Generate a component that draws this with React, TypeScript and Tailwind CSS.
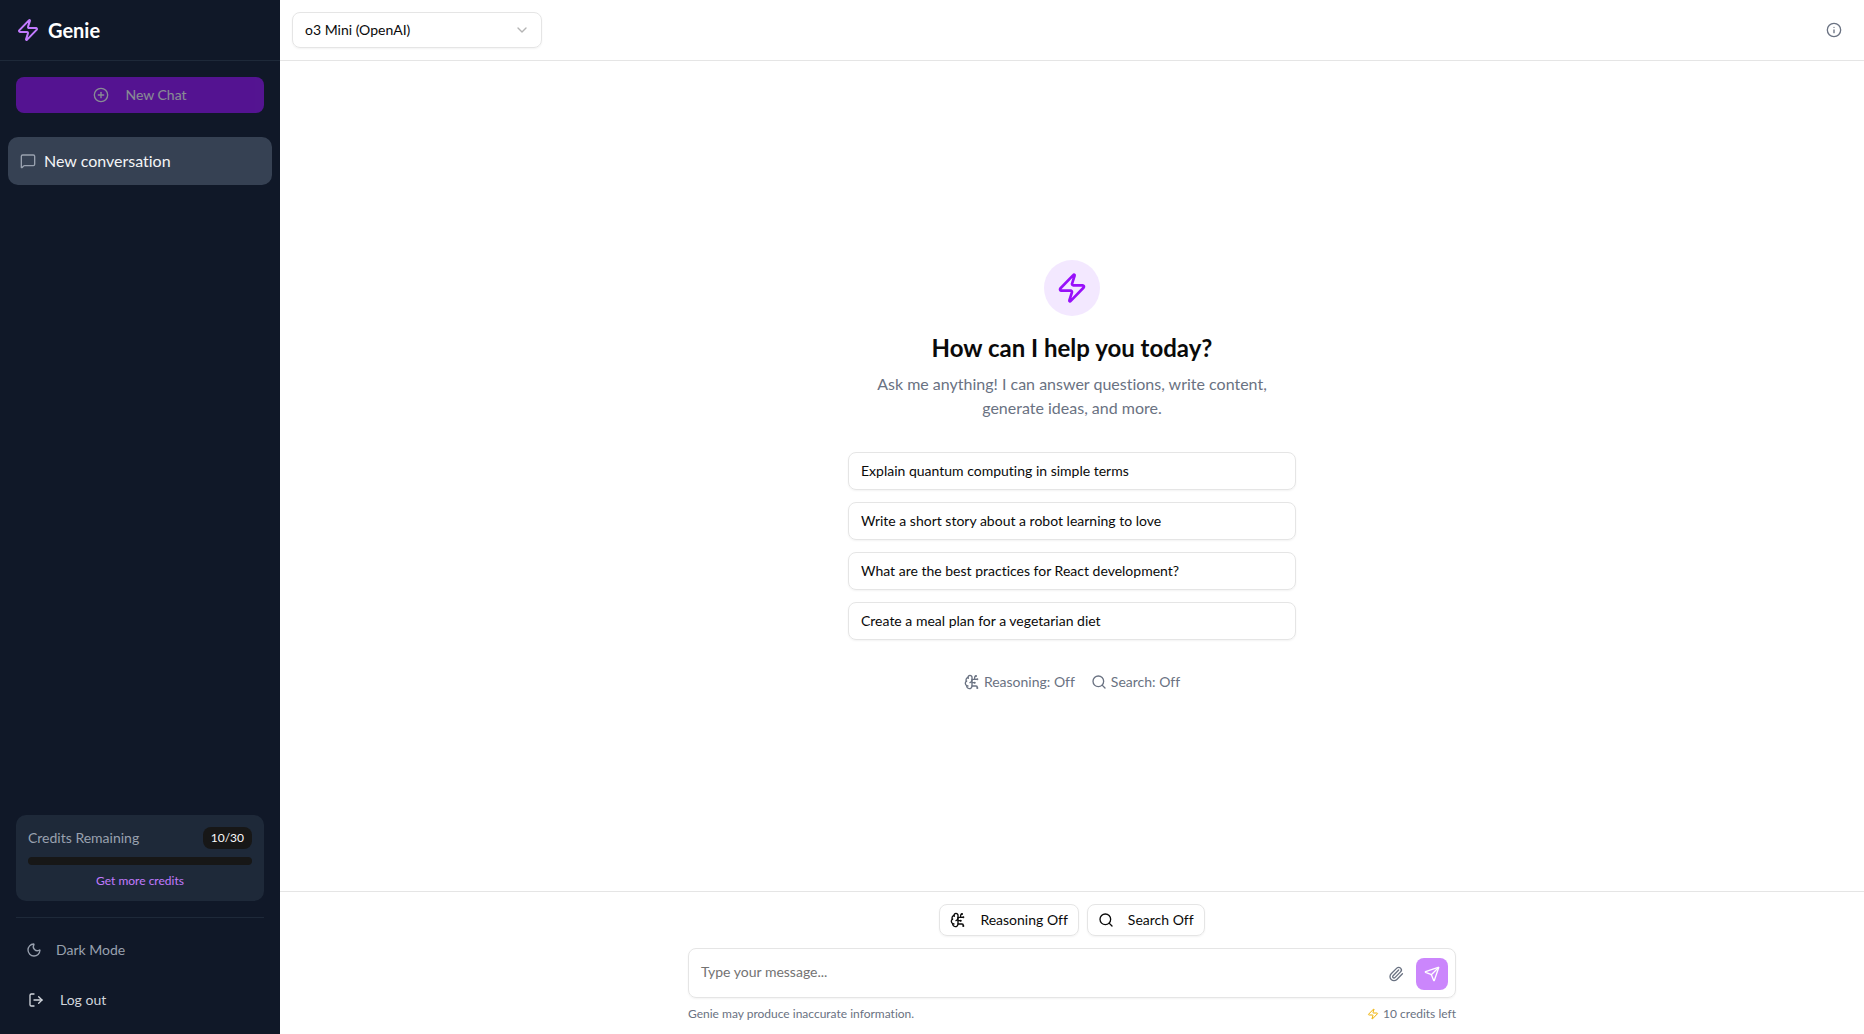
import { useState } from 'react';
import {
    BrainCircuit,
    ChevronDown,
    Info,
    LogOut,
    MessageSquare,
    Moon,
    Paperclip,
    PlusCircle,
    Search,
    Send,
    Zap,
} from 'lucide-react';

const SUGGESTIONS = [
    'Explain quantum computing in simple terms',
    'Write a short story about a robot learning to love',
    'What are the best practices for React development?',
    'Create a meal plan for a vegetarian diet',
];

const MODELS = ['o3 Mini (OpenAI)', 'GPT-4o (OpenAI)', 'Claude 3.5 Sonnet (Anthropic)'];

function Sidebar() {
    return (
        <aside className="flex w-[280px] shrink-0 flex-col bg-gray-900 text-white">
            <div className="flex h-[61px] items-center gap-2 border-b border-gray-800 px-4">
                <Zap size={24} className="text-purple-400" />
                <h1 className="text-xl font-bold">Genie</h1>
            </div>

            <div className="p-4">
                <button
                    type="button"
                    disabled
                    className="flex h-9 w-full items-center justify-center gap-4 rounded-lg bg-purple-600 text-sm text-white opacity-50"
                >
                    <PlusCircle size={16} />
                    New Chat
                </button>
            </div>

            <nav className="flex-1 p-2">
                <a href="#new" className="flex h-12 items-center gap-2 rounded-[10px] bg-gray-700 px-3 text-gray-100">
                    <MessageSquare size={16} className="text-gray-400" />
                    <span className="truncate">New conversation</span>
                </a>
            </nav>

            <div className="p-4">
                <div className="rounded-[10px] bg-gray-800 p-3">
                    <div className="mb-2 flex items-center justify-between">
                        <span className="text-sm text-gray-400">Credits Remaining</span>
                        <span className="rounded-lg bg-neutral-900 px-2 py-[3px] text-xs text-neutral-50">10/30</span>
                    </div>
                    <div className="h-2 rounded-full bg-neutral-900" />
                    <a href="#credits" className="mt-2 block text-center text-xs text-purple-400">
                        Get more credits
                    </a>
                </div>

                <div className="mt-4 border-t border-gray-800 pt-3">
                    <button type="button" className="flex h-10 w-full items-center gap-3.5 px-2.5 text-sm text-gray-400">
                        <Moon size={16} />
                        Dark Mode
                    </button>
                    <button type="button" className="mt-3 flex h-9 w-full items-center gap-4 px-3 text-sm text-gray-300">
                        <LogOut size={16} />
                        Log out
                    </button>
                </div>
            </div>
        </aside>
    );
}

function Welcome() {
    return (
        <section className="flex flex-1 flex-col items-center justify-center px-4 text-center">
            <div className="mb-4 flex size-14 items-center justify-center rounded-full bg-purple-100">
                <Zap size={32} className="text-purple-600" />
            </div>
            <h2 className="mb-2 text-2xl font-bold">How can I help you today?</h2>
            <p className="mb-8 max-w-md text-gray-500">
                Ask me anything! I can answer questions, write content, generate ideas, and more.
            </p>

            <div className="flex w-full max-w-md flex-col gap-3">
                {SUGGESTIONS.map((text) => (
                    <button
                        key={text}
                        type="button"
                        className="h-[38px] rounded-lg border border-neutral-200 px-3 text-left text-sm shadow-xs"
                    >
                        {text}
                    </button>
                ))}
            </div>

            <div className="mt-8 flex items-center gap-4 text-sm text-gray-500">
                <span className="flex items-center gap-1">
                    <BrainCircuit size={16} />
                    Reasoning: Off
                </span>
                <span className="flex items-center gap-1">
                    <Search size={16} />
                    Search: Off
                </span>
            </div>
        </section>
    );
}

function Composer() {
    const [message, setMessage] = useState('');
    const toggle = 'flex h-8 items-center gap-3.5 rounded-lg border border-neutral-200 px-2.5 text-sm shadow-xs';

    return (
        <footer className="border-t border-neutral-200 p-3">
            <div className="mx-auto max-w-3xl">
                <div className="mb-3 flex justify-center gap-2">
                    <button type="button" className={toggle}>
                        <BrainCircuit size={16} />
                        Reasoning Off
                    </button>
                    <button type="button" className={toggle}>
                        <Search size={16} />
                        Search Off
                    </button>
                </div>

                <form className="flex h-[50px] items-end rounded-lg border border-neutral-200 pr-[7px] pb-[7px] shadow-xs">
                    <textarea
                        rows={1}
                        aria-label="Message"
                        placeholder="Type your message..."
                        value={message}
                        onChange={(e) => setMessage(e.target.value)}
                        className="h-10 flex-1 resize-none px-3 pt-3 text-sm outline-none placeholder:text-neutral-500"
                    />
                    <button type="button" aria-label="Attach file" className="flex size-8 items-center justify-center text-gray-500">
                        <Paperclip size={16} />
                    </button>
                    <button
                        type="submit"
                        disabled
                        aria-label="Send"
                        className="ml-1 flex size-8 items-center justify-center rounded-lg bg-purple-600 text-white opacity-50"
                    >
                        <Send size={16} />
                    </button>
                </form>

                <div className="mt-2 flex items-center justify-between text-xs text-gray-500">
                    <span>Genie may produce inaccurate information.</span>
                    <span className="flex items-center gap-1">
                        <Zap size={12} className="text-yellow-500" />
                        10 credits left
                    </span>
                </div>
            </div>
        </footer>
    );
}

export default function App() {
    return (
        <div className="flex min-h-screen bg-white font-['Lato',sans-serif] text-neutral-950 [font-variant-ligatures:none]">
            <Sidebar />
            <main className="flex min-w-0 flex-1 flex-col">
                <header className="flex h-[61px] items-center justify-between border-b border-neutral-200 px-3">
                    <div className="relative w-[250px]">
                        <select
                            aria-label="Model"
                            className="h-9 w-full appearance-none rounded-lg border border-neutral-200 px-3 text-sm shadow-xs"
                        >
                            {MODELS.map((model) => (
                                <option key={model}>{model}</option>
                            ))}
                        </select>
                        <ChevronDown size={16} className="pointer-events-none absolute top-2.5 right-3 text-neutral-950 opacity-30" />
                    </div>
                    <button type="button" aria-label="About this model" className="flex size-9 items-center justify-center text-gray-500">
                        <Info size={16} />
                    </button>
                </header>
                <Welcome />
                <Composer />
            </main>
        </div>
    );
}
